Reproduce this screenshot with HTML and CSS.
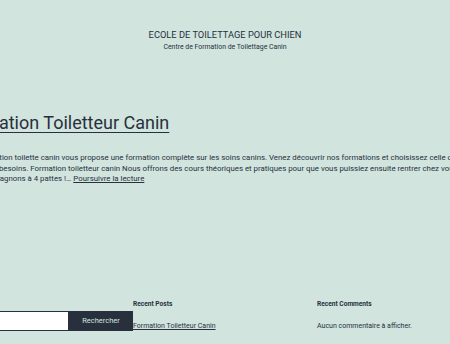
FILE: index.html
```html
<!DOCTYPE html>
<html lang="fr">
<head>
    <meta charset="UTF-8">
    <meta name="viewport" content="width=device-width, initial-scale=1.0">
    <title>Ecole de Toilettage pour Chien</title>
    <link rel="stylesheet" href="styles.css">
</head>
<body>
    <header class="site-header">
        <p class="site-title">ECOLE DE TOILETTAGE POUR CHIEN</p>
        <p class="site-description">Centre de Formation de Toilettage Canin</p>
    </header>

    <main class="site-main">
        <article class="entry">
            <h2 class="entry-title"><a href="#">Formation Toiletteur Canin</a></h2>
            <div class="entry-summary">
                <p>Notre formation toilette canin vous propose une formation complète sur les soins canins. Venez découvrir nos formations et choisissez celle qui vous<br>
                cadre à vos besoins. Formation toiletteur canin Nous offrons des cours théoriques et pratiques pour que vous puissiez ensuite rentrer chez vous<br>
                et vos compagnons à 4 pattes !… <a href="#">Poursuivre la lecture</a></p>
            </div>
        </article>
    </main>

    <footer class="widget-area">
        <section class="widget">
            <form class="search-form">
                <input type="search" class="search-field" aria-label="Rechercher">
                <button type="submit" class="search-submit">Rechercher</button>
            </form>
        </section>
        <section class="widget">
            <h3 class="widget-title">Recent Posts</h3>
            <ul>
                <li><a href="#">Formation Toiletteur Canin</a></li>
            </ul>
        </section>
        <section class="widget">
            <h3 class="widget-title">Recent Comments</h3>
            <p>Aucun commentaire à afficher.</p>
        </section>
    </footer>
</body>
</html>
```

FILE: styles.css
```css
* {
    margin: 0;
    padding: 0;
    box-sizing: border-box;
}

body {
    font-family: Roboto, 'Liberation Sans', sans-serif;
    background: #d1e4dd;
    color: #28303d;
    height: 344px;
    overflow: hidden;
    display: flex;
    flex-direction: column;
    align-items: center;
}

a {
    color: #28303d;
}

/* En-tête */
.site-header {
    text-align: center;
    padding-top: 29px;
}

.site-title {
    font-size: 9.3px;
    line-height: 12px;
}

.site-description {
    font-size: 6.9px;
    line-height: 10px;
    margin-top: 1px;
}

/* Contenu principal : plus large que la fenêtre, centré */
.site-main {
    width: 536px;
    flex-shrink: 0;
    margin-top: 58px;
}

.entry-title {
    font-size: 18px;
    font-weight: 400;
    line-height: 26px;
}

.entry-title a {
    text-decoration-thickness: 1px;
    text-underline-offset: 3px;
}

.entry-summary {
    margin-top: 17px;
    font-size: 7.85px;
    line-height: 10.5px;
    white-space: nowrap;
}

/* Widgets */
.widget-area {
    width: 552px;
    flex-shrink: 0;
    display: grid;
    grid-template-columns: repeat(3, 184px);
    margin-top: 114px;
    font-size: 7px;
}

.widget-title {
    font-size: 6.6px;
    font-weight: 700;
    line-height: 10px;
    margin-bottom: 13px;
}

.widget ul {
    list-style: none;
}

.search-form {
    display: flex;
    margin-top: 12px;
    height: 20px;
}

.search-field {
    width: 120px;
    border: 1px solid #28303d;
    background: #fff;
}

.search-submit {
    flex: 1;
    border: none;
    background: #28303d;
    color: #d1e4dd;
    font-family: inherit;
    font-size: 7.5px;
}
```
